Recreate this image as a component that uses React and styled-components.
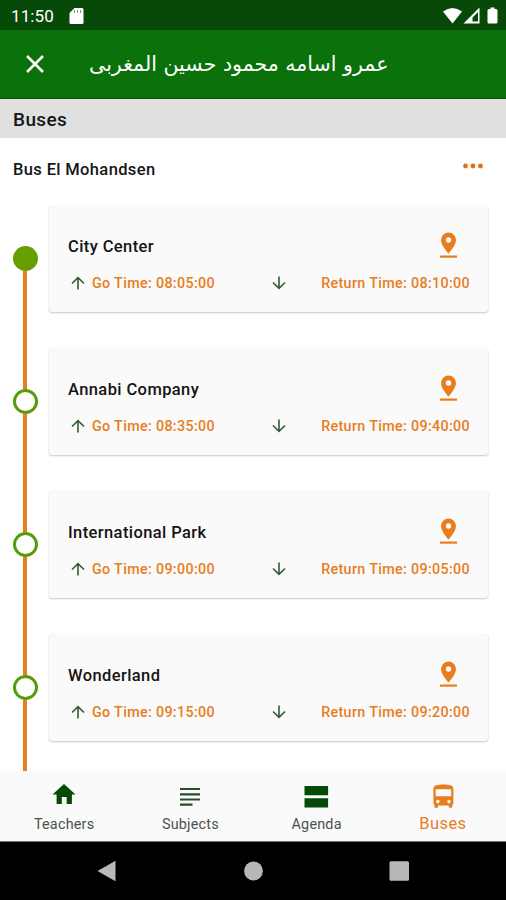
import React from 'react';
import styled, { createGlobalStyle } from 'styled-components';

const ORANGE = '#e87d1e';
const GREEN = '#064a08';

const GlobalStyle = createGlobalStyle`
  * { box-sizing: border-box; }
  body { margin: 0; background: #fff; font-family: Roboto, "Liberation Sans", sans-serif; }
`;

const Screen = styled.div`
  width: 506px;
  height: 900px;
  display: flex;
  flex-direction: column;
  overflow: hidden;
  background: #fff;
`;

const StatusBar = styled.header`
  height: 30px;
  flex: none;
  display: flex;
  align-items: center;
  padding: 2px 7px 0 11px;
  background: #074a08;
  color: #fff;
`;

const Clock = styled.span`
  width: 58px;
  font-size: 17px;
  font-weight: 400;
  line-height: 28px;
  letter-spacing: 0.1px;
`;

const StatusIcons = styled.div`
  display: flex;
  margin-left: auto;
  svg { display: block; }
`;

const AppBar = styled.div`
  height: 69px;
  flex: none;
  display: flex;
  align-items: center;
  padding-left: 26px;
  background: #0a710b;
  border-bottom: 1px solid #07520a;
  color: #fff;
`;

const StudentName = styled.h1`
  margin: 0 0 0 45px;
  font: 400 20.55px/34px "DejaVu Sans", sans-serif;
  white-space: nowrap;
`;

const SectionTitle = styled.h2`
  height: 39px;
  flex: none;
  margin: 0;
  padding-left: 13px;
  background: #e0e0e0;
  color: #161616;
  font-size: 19px;
  font-weight: 500;
  line-height: 42px;
  letter-spacing: 0.4px;
`;

const RouteHeader = styled.div`
  height: 67px;
  flex: none;
  display: flex;
  justify-content: space-between;
  padding: 0 21px 0 13px;
`;

const RouteName = styled.h3`
  margin: 0;
  color: #161616;
  font-size: 16.5px;
  font-weight: 500;
  line-height: 63px;
  letter-spacing: 0.36px;
`;

const MoreDots = styled.svg`
  margin-top: 25px;
`;

const Stops = styled.main`
  flex: 1;
  min-height: 0;
  overflow: hidden;
`;

const Stop = styled.section`
  height: 143.15px;
  display: flex;
`;

const Rail = styled.div`
  width: 49px;
  display: flex;
  flex-direction: column;
  align-items: center;
`;

const RailLine = styled.div`
  width: 4px;
  margin-left: 1px;
  height: ${(p) => p.$length}px;
  background: ${(p) => (p.$hidden ? 'transparent' : ORANGE)};
`;

const Marker = styled.div`
  width: 25px;
  height: 25px;
  flex: none;
  margin-left: 1px;
  border: 3px solid ${(p) => (p.$filled ? '#669d00' : '#559c08')};
  border-radius: 50%;
  background: ${(p) => (p.$filled ? '#669d00' : '#fff')};
`;

const Card = styled.article`
  width: 439px;
  height: 107px;
  padding: 20px 18px 0 19px;
  border-radius: 3px;
  background: #fafafa;
  box-shadow: 0 1px 2px rgba(0, 0, 0, 0.22), 0 0 1px rgba(0, 0, 0, 0.08);
`;

const CardTop = styled.div`
  height: 40px;
  display: flex;
  justify-content: space-between;
`;

const StopName = styled.h4`
  margin: 0;
  color: #141414;
  font-size: 16.5px;
  font-weight: 500;
  line-height: 43px;
  letter-spacing: 0.4px;
`;

const Pin = styled.svg`
  display: block;
  margin: 5px 13px 0 0;
`;

const Times = styled.div`
  height: 36px;
  display: flex;
  align-items: center;
`;

const Time = styled.span`
  color: ${ORANGE};
  font-size: 14.3px;
  font-weight: 500;
  line-height: 20px;
  letter-spacing: 0.34px;
  white-space: nowrap;
  &:last-child { margin-left: auto; }
`;

const Arrow = styled.svg`
  display: block;
  flex: none;
  margin-left: ${(p) => p.$gap}px;
  margin-right: ${(p) => (p.$gap < 10 ? 7 : 0)}px;
`;

const TabBar = styled.nav`
  height: 71px;
  flex: none;
  display: grid;
  grid-template-columns: repeat(4, 1fr);
  padding-left: 1px;
  background: #fafafa;
  border-bottom: 1px solid #777;
`;

const Tab = styled.div`
  display: flex;
  flex-direction: column;
  align-items: center;
  padding-top: 11px;
  color: ${(p) => (p.$active ? ORANGE : GREEN)};
  svg { display: block; flex: none; }
`;

const TabLabel = styled.span`
  margin-top: ${(p) => (p.$active ? 2 : 3)}px;
  color: ${(p) => (p.$active ? ORANGE : '#48544b')};
  font-size: ${(p) => (p.$active ? 16.5 : 14.4)}px;
  line-height: 20px;
  letter-spacing: ${(p) => (p.$active ? 0.45 : 0.2)}px;
`;

const SystemNav = styled.footer`
  height: 58px;
  flex: none;
  display: flex;
  justify-content: center;
  align-items: center;
  gap: 126px;
  background: #000;
`;

const stops = [
  { name: 'City Center', go: '08:05:00', back: '08:10:00' },
  { name: 'Annabi Company', go: '08:35:00', back: '09:40:00' },
  { name: 'International Park', go: '09:00:00', back: '09:05:00' },
  { name: 'Wonderland', go: '09:15:00', back: '09:20:00' },
];

const ArrowIcon = ({ down, gap }) => (
  <Arrow $gap={gap} width="14" height="14" viewBox="0 0 14 14" fill="none" stroke="#315c39" strokeWidth="1.6">
    {down ? <path d="M7 .5v12M1 6.500l6 5.900 6-5.900" /> : <path d="M7 13.500v-12M1 7.500l6-5.900 6 5.900" />}
  </Arrow>
);

const tabs = [
  { label: 'Teachers', icon: <path d="M4.600 22V12.600H.5L12 2l11.500 10.600h-3.600V22h-5.200v-7H9.800v7z" fill="currentColor" /> },
  {
    label: 'Subjects',
    icon: <path d="M2 7h20M2 12.300h20M2 17.500h20M2 22.700h12.500" stroke="#284c2c" strokeWidth="2.200" />,
  },
  { label: 'Agenda', icon: <path d="M-.5 4h23.600v9.200H-.5zM-.5 16.300h23.600v9.300H-.5z" fill="currentColor" /> },
  {
    label: 'Buses',
    active: true,
    icon: (
      <path
        transform="translate(-.9 1.400) scale(1.110)"
        fill="currentColor"
        fillRule="evenodd"
        d="M3 17.200c0 .9.4 1.700 1 2.200V21c0 .6.4 1 1 1h1.200c.6 0 1-.4 1-1v-1h9.600v1c0 .6.4 1 1 1H19c.6 0 1-.4 1-1v-1.600c.6-.5 1-1.300 1-2.200V5c0-3.500-4-4-9-4s-9 .5-9 4zM7 18a1.600 1.600 0 1 1 0-3.200A1.600 1.600 0 0 1 7 18zm10 0a1.600 1.600 0 1 1 0-3.200 1.600 1.600 0 0 1 0 3.200zM5 5.200h14v6.300H5z"
      />
    ),
  },
];

export default function App() {
  return (
    <>
      <GlobalStyle />
      <Screen>
        <StatusBar>
          <Clock>11:50</Clock>
          <svg width="15" height="17" viewBox="0 0 15 17">
            <path d="M5.500 0H13q1.500 0 1.500 1.500v13q0 1.500-1.500 1.500H2Q.5 16 .5 14.500V5z" fill="#fff" />
            <path d="M5.500 2v3M8.500 2v3M11.500 2v3" stroke="#7a997a" />
          </svg>
          <StatusIcons>
            <svg width="56" height="18" viewBox="0 0 56 18">
              <path d="M0 4.500Q9.500-2.500 19 4.500L9.500 16.500z" fill="#fff" />
              <path fillRule="evenodd" d="M20.500 16.500L36.500.5v16zM29.500 14.500H35v-9.500l-5.500 5.500z" fill="#fff" />
              <path d="M47.500 .5h4v1.500H53q1.500 0 1.500 1.500v11.500q0 1.500-1.500 1.500h-7q-1.500 0-1.500-1.500V3.500Q44.500 2 46 2h1.500z" fill="#fff" />
            </svg>
          </StatusIcons>
        </StatusBar>
        <AppBar>
          <svg width="18" height="18" viewBox="0 0 18 18" stroke="#fff" strokeWidth="2.500">
            <path d="M1 1l16 16M17 1L1 17" />
          </svg>
          <StudentName dir="rtl" lang="ar">عمرو اسامه محمود حسين المغربى</StudentName>
        </AppBar>
        <SectionTitle>Buses</SectionTitle>
        <RouteHeader>
          <RouteName>Bus El Mohandsen</RouteName>
          <MoreDots width="22" height="6" viewBox="0 0 22 6" fill="#e06f10">
            <circle cx="2.500" cy="3" r="2.400" />
            <circle cx="10" cy="3" r="2.400" />
            <circle cx="17.500" cy="3" r="2.400" />
          </MoreDots>
        </RouteHeader>
        <Stops>
          {stops.map((stop, i) => (
            <Stop key={stop.name}>
              <Rail>
                <RailLine $length={41} $hidden={i === 0} />
                <Marker $filled={i === 0} />
                <RailLine $length={77.15} />
              </Rail>
              <Card>
                <CardTop>
                  <StopName>{stop.name}</StopName>
                  <Pin width="18" height="28" viewBox="0 0 18 28" fill={ORANGE}>
                    <path fillRule="evenodd" d="M9.500 2.500a7.500 7.500 0 0 0-7.500 7.500C2 15.500 9.500 23.500 9.500 23.500s7.500-8 7.500-13.500A7.500 7.500 0 0 0 9.500 2.500zm0 10.200a2.700 2.700 0 1 1 0-5.400 2.700 2.700 0 0 1 0 5.400z" />
                    <path d="M1 25.500h17v2.200H1z" />
                  </Pin>
                </CardTop>
                <Times>
                  <ArrowIcon gap={3} />
                  <Time>Go Time: {stop.go}</Time>
                  <ArrowIcon down gap={57} />
                  <Time>Return Time: {stop.back}</Time>
                </Times>
              </Card>
            </Stop>
          ))}
        </Stops>
        <TabBar>
          {tabs.map((tab) => (
            <Tab key={tab.label} $active={tab.active}>
              <svg width="24" height="30" viewBox="0 0 24 30" overflow="visible">{tab.icon}</svg>
              <TabLabel $active={tab.active}>{tab.label}</TabLabel>
            </Tab>
          ))}
        </TabBar>
        <SystemNav>
          <svg width="20" height="22" viewBox="0 0 20 22"><path d="M18.500 .8v20.500L.5 11z" fill="#b8b8b8" /></svg>
          <svg width="20" height="20" viewBox="0 0 20 20"><circle cx="10.500" cy="10" r="9.400" fill="#b8b8b8" /></svg>
          <svg width="20" height="20" viewBox="0 0 20 20"><rect x=".5" y=".3" width="19.500" height="19.500" rx="1.500" fill="#b8b8b8" /></svg>
        </SystemNav>
      </Screen>
    </>
  );
}
